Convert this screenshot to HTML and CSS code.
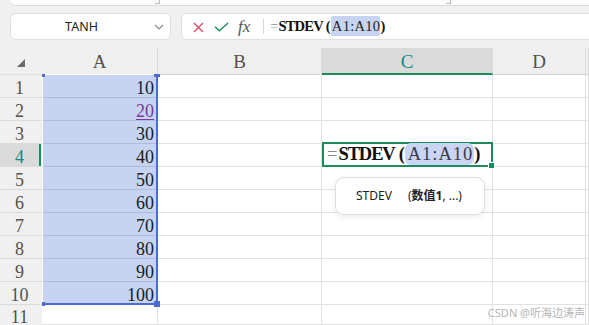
FILE: index.html
```html
<!DOCTYPE html>
<html lang="zh-CN">
<head>
  <meta charset="UTF-8">
  <meta name="viewport" content="width=device-width, initial-scale=1.0">
  <title>STDEV</title>
  <link rel="stylesheet" href="styles.css">
</head>
<body>
  <div class="ribbon-edge">
    <span class="grip grip-left"></span>
    <span class="grip grip-right"></span>
  </div>

  <div class="toolbar">
    <div class="name-box">
      <span class="name">TANH</span>
      <svg class="chevron" width="10" height="6" viewBox="0 0 10 6"><path d="M1 1l4 4 4-4" fill="none" stroke="#8a8a8a" stroke-width="1.2"/></svg>
    </div>
    <div class="formula-bar">
      <svg class="icon-cancel" width="11" height="11" viewBox="0 0 11 11"><path d="M1 1L10 10M10 1L1 10" stroke="#e04a63" stroke-width="1.4" fill="none"/></svg>
      <svg class="icon-ok" width="15" height="10" viewBox="0 0 15 10"><path d="M1 4.8l4.4 4L14 1" stroke="#1f915f" stroke-width="1.4" fill="none"/></svg>
      <span class="fx">fx</span>
      <span class="divider"></span>
      <span class="formula"><span class="eq">=</span><b>STDEV</b><b class="paren">(</b><span class="ref">A1:A10</span><b>)</b></span>
    </div>
  </div>

  <div class="sheet">
    <div class="corner"><svg width="8" height="8" viewBox="0 0 8 8"><polygon points="8,0 8,8 0,8" fill="#6a6a6a"/></svg></div>
    <div class="col-head">A</div>
    <div class="col-head">B</div>
    <div class="col-head active">C</div>
    <div class="col-head">D</div>
    <div class="col-head"></div>

    <div class="row-head">1</div><div class="cell sel num">10</div><div class="cell"></div><div class="cell"></div><div class="cell"></div><div class="cell"></div>
    <div class="row-head">2</div><div class="cell sel num"><span class="link">20</span></div><div class="cell"></div><div class="cell"></div><div class="cell"></div><div class="cell"></div>
    <div class="row-head">3</div><div class="cell sel num">30</div><div class="cell"></div><div class="cell"></div><div class="cell"></div><div class="cell"></div>
    <div class="row-head active">4</div><div class="cell sel num">40</div><div class="cell"></div>
    <div class="cell editing">
      <div class="editor"><span class="eq">=</span><b>STDEV</b><b class="paren">(</b><span class="ref">A1:A10</span><b>)</b></div>
    </div>
    <div class="cell"></div><div class="cell"></div>
    <div class="row-head">5</div><div class="cell sel num">50</div><div class="cell"></div><div class="cell"></div><div class="cell"></div><div class="cell"></div>
    <div class="row-head">6</div><div class="cell sel num">60</div><div class="cell"></div><div class="cell"></div><div class="cell"></div><div class="cell"></div>
    <div class="row-head">7</div><div class="cell sel num">70</div><div class="cell"></div><div class="cell"></div><div class="cell"></div><div class="cell"></div>
    <div class="row-head">8</div><div class="cell sel num">80</div><div class="cell"></div><div class="cell"></div><div class="cell"></div><div class="cell"></div>
    <div class="row-head">9</div><div class="cell sel num">90</div><div class="cell"></div><div class="cell"></div><div class="cell"></div><div class="cell"></div>
    <div class="row-head">10</div><div class="cell sel num">100</div><div class="cell"></div><div class="cell"></div><div class="cell"></div><div class="cell"></div>
    <div class="row-head last">11</div><div class="cell"></div><div class="cell"></div><div class="cell"></div><div class="cell"></div><div class="cell"></div>

    <!-- referenced range A1:A10 -->
    <div class="range">
      <span class="handle h-tl"></span>
      <span class="handle h-tr"></span>
      <span class="handle h-bl"></span>
      <span class="handle h-br"></span>
    </div>

    <div class="hint">STDEV<span class="args">(<b>数值1</b>, ...)</span></div>
  </div>

  <div class="watermark">CSDN @听海边涛声</div>
</body>
</html>
```

FILE: styles.css
```css
:root {
  --clr-BG: #f0f0f0;
  --clr-LINE: #e1e1e1;
  --clr-GREEN: #1d8c5c;
  --clr-TEAL: #13898a;
  --clr-SEL: #c6d4f1;
  --clr-BLUE: #4a6bd2;
}

body, html {
  margin: 0;
  padding: 0;
  height: 100%;
  overflow: hidden;
  background-color: var(--clr-BG);
  font-family: "Noto Sans", "Noto Sans CJK SC", sans-serif;
}

body {
  position: relative;
}

/* bottom edge of the ribbon above */
.ribbon-edge {
  position: relative;
  height: 5px;
  margin-left: 10px;
  background-color: #fdfbfb;
  border-bottom-left-radius: 6px;
  box-shadow: 0 1px 0 #dcdcdc;
}

.grip {
  position: absolute;
  top: 0;
  width: 4px;
  height: 3px;
  border-right: 1px solid #b9b9b9;
  border-bottom: 1px solid #b9b9b9;
}

.grip-left { left: 145px; }
.grip-right { left: 436px; }

.toolbar {
  display: flex;
  gap: 10px;
  padding: 8px 0 0 10px;
  margin-right: -14px;
}

.name-box, .formula-bar {
  height: 27px;
  box-sizing: border-box;
  background-color: #fff;
  border: 1px solid #dfdfdf;
  border-radius: 6px;
  display: flex;
  align-items: center;
}

.name-box {
  width: 161px;
  flex: none;
  position: relative;
  justify-content: center;
}

.name {
  font-size: 12.5px;
  color: #222;
  margin-left: -18px;
}

.chevron {
  position: absolute;
  right: 6px;
  top: 10px;
}

.formula-bar {
  flex: 1;
  padding-left: 11px;
}

.icon-cancel { margin-top: 1px; }

.icon-ok {
  margin-left: 10px;
  margin-top: 1px;
}

.fx {
  margin-left: 9px;
  font-family: "Liberation Serif", serif;
  font-style: italic;
  font-size: 17px;
  color: #555;
  line-height: 1;
}

.divider {
  width: 1px;
  height: 15px;
  margin-left: 13px;
  background-color: #d6d6d6;
}

.formula {
  margin-left: 6px;
  font-family: "Liberation Serif", serif;
  font-size: 14.5px;
  color: #111;
  white-space: nowrap;
}

.formula b {
  letter-spacing: -0.8px;
}

.formula .paren {
  padding: 0 1px 0 3px;
}

.formula .eq {
  color: #999;
}

.formula .ref {
  background-color: #c7d4f1;
  border-radius: 2px;
  padding: 2px 0 2px 1px;
  letter-spacing: 0.3px;
  color: #222;
}

/* grid */
.sheet {
  position: relative;
  margin-top: 8px;
  display: grid;
  grid-template-columns: 42px 116px 164px 171px 93px 1fr;
  grid-template-rows: 27px repeat(10, 23px) 20px;
  font-family: "Liberation Serif", serif;
}

.corner, .col-head, .row-head, .cell {
  box-sizing: border-box;
  border-right: 1px solid var(--clr-LINE);
  border-bottom: 1px solid var(--clr-LINE);
}

.corner {
  display: flex;
  justify-content: center;
  align-items: center;
  padding: 3px 0 0 0;
  border-right-color: var(--clr-BG);
  background-color: var(--clr-BG);
}

.col-head {
  background-color: #efefef;
  text-align: center;
  font-size: 19px;
  line-height: 26px;
  padding-top: 1px;
  color: #55504a;
  border-right-color: #dcdcdc;
  border-bottom-color: #d6d6d6;
}

.col-head.active {
  background-color: #dadada;
  color: var(--clr-TEAL);
  border-bottom: 2px solid var(--clr-GREEN);
}

.row-head {
  background-color: var(--clr-BG);
  text-align: center;
  font-size: 18px;
  line-height: 18px;
  padding: 4px 2px 0 0;
  color: #55504a;
  border-right-color: var(--clr-BG);
  border-bottom-color: #dadada;
}

.row-head.last {
  line-height: 14px;
  padding-top: 5px;
  border-bottom: none;
}

.row-head.active {
  background-color: #dadada;
  color: var(--clr-TEAL);
  box-shadow: inset -2px 0 0 var(--clr-GREEN);
}

.cell {
  background-color: #fff;
}

.cell.sel {
  background-color: var(--clr-SEL);
  border-bottom-color: #adbbdc;
}

.num {
  text-align: right;
  font-size: 18px;
  line-height: 18px;
  padding: 4px 3px 0 0;
  color: #1c1c22;
}

.link {
  color: #7a3aa0;
  text-decoration: underline;
  text-underline-offset: 2px;
}

.cell.editing {
  position: relative;
}

.editor {
  position: absolute;
  top: -2px;
  left: 0;
  right: -1px;
  bottom: -1px;
  border: 2px solid var(--clr-GREEN);
  box-sizing: border-box;
  padding: 1px 0 0 3px;
  font-family: "Liberation Serif", serif;
  font-size: 18.5px;
  line-height: 19px;
  color: #111;
  white-space: nowrap;
}

.editor b {
  letter-spacing: -1.1px;
}

.editor .paren {
  padding: 0 1px 0 4px;
}

.editor::after {
  content: "";
  position: absolute;
  right: -4px;
  bottom: -4px;
  width: 5px;
  height: 5px;
  background-color: var(--clr-GREEN);
  border: 1px solid #fff;
}

.editor .eq {
  color: #8a8a8a;
  margin-right: 1px;
}

.editor .ref {
  background-color: #c9d5f2;
  border-radius: 6px;
  padding: 1px 1px 1px 3px;
  letter-spacing: 1px;
  color: #3a3a48;
}

/* referenced range */
.range {
  position: absolute;
  left: 42px;
  top: 26px;
  width: 116px;
  height: 231px;
  box-sizing: border-box;
  border-top: 1px solid #fff;
  border-left: 1px solid #fff;
  border-right: 2px solid var(--clr-BLUE);
  border-bottom: 2px solid var(--clr-BLUE);
}

.handle {
  position: absolute;
  background-color: var(--clr-BLUE);
}

.h-tl { left: -1px; top: -1px; width: 3px; height: 3px; }
.h-tr { right: -4px; top: -1px; width: 6px; height: 3px; }
.h-bl { left: -1px; bottom: -3px; width: 3px; height: 4px; }
.h-br { right: -4px; bottom: -4px; width: 6px; height: 6px; }

/* function hint */
.hint {
  position: absolute;
  left: 335px;
  top: 129px;
  width: 150px;
  height: 38px;
  box-sizing: border-box;
  padding-left: 20px;
  background-color: #fff;
  border: 1px solid #dedede;
  border-radius: 9px;
  box-shadow: 0 2px 6px rgba(0, 0, 0, 0.08);
  font-family: "Noto Sans", "Noto Sans CJK SC", sans-serif;
  font-size: 12px;
  line-height: 36px;
  color: #222;
  white-space: nowrap;
}

.hint .args {
  margin-left: 16px;
}

.watermark {
  position: absolute;
  right: 4px;
  bottom: 5px;
  font-size: 11px;
  color: #b4b4b4;
  white-space: nowrap;
}
```
